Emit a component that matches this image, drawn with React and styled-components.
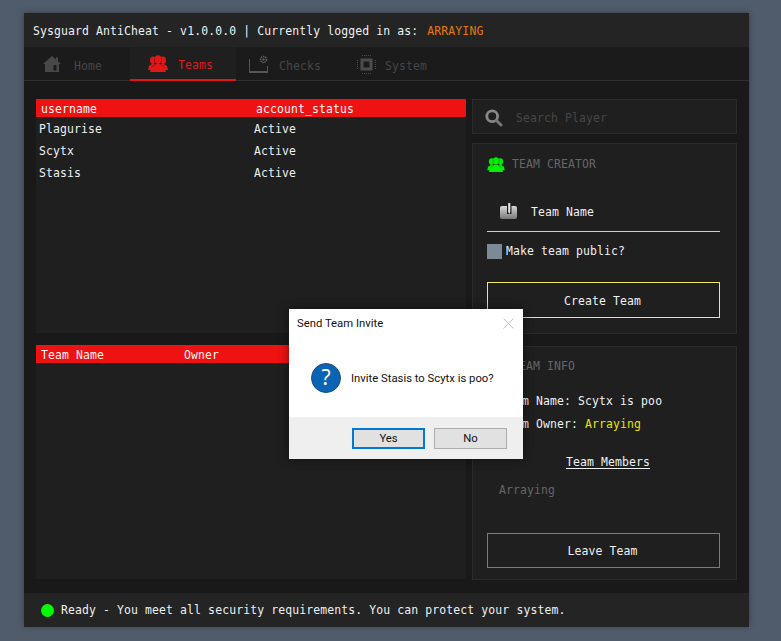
import React from 'react'
import styled, { createGlobalStyle } from 'styled-components'

const GlobalStyle = createGlobalStyle`
  html, body { margin: 0; padding: 0; height: 100%; background: #505c6b; }
  * { box-sizing: border-box; }
`

const Page = styled.div`
  position: relative;
  width: 781px;
  height: 641px;
  padding: 13px 32px 0 24px;
  overflow: hidden;
  font-family: "DejaVu Sans Mono", "Liberation Mono", monospace;
  font-size: 11.45px;
  letter-spacing: 0.12px;
  color: #eef0f2;
`
const Window = styled.div`
  width: 725px;
  height: 613px;
  display: flex;
  flex-direction: column;
  background: #191919;
  box-shadow: 0 0 6px rgba(0, 0, 0, 0.35);
`
const TitleBar = styled.div`
  height: 34px;
  flex: none;
  display: flex;
  align-items: center;
  padding: 2px 0 0 9px;
  background: #242424;
  white-space: pre;
`
const Orange = styled.span`
  margin-left: 2px;
  color: #e8780f;
`
const TabBar = styled.div`
  height: 34px;
  flex: none;
  display: flex;
  background: #1b1b1b;
  border-bottom: 1px solid #2f2f2f;
`
const Tab = styled.div`
  width: 106px;
  height: 34px;
  display: flex;
  align-items: center;
  padding-left: ${p => p.$pad}px;
  gap: ${p => p.$gap}px;
  color: ${p => (p.$active ? '#e01818' : '#464646')};
  background: ${p => (p.$active ? '#1f1f1f' : 'transparent')};
  border-bottom: ${p => (p.$active ? '2px solid #e01818' : 'none')};
`
const TabLabel = styled.span`
  padding-top: 4px;
`
const Body = styled.div`
  flex: 1;
  display: grid;
  grid-template-columns: 430px 265px;
  column-gap: 6px;
  padding: 18px 0 13px 12px;
`
const Column = styled.div`
  display: flex;
  flex-direction: column;
`
const TablePanel = styled.div`
  height: 234px;
  background: #1f1f1f;
  margin-bottom: ${p => (p.$last ? 0 : 12)}px;
`
const HeadRow = styled.div`
  height: 18px;
  display: grid;
  grid-template-columns: ${p => p.$cols};
  align-items: center;
  padding: 1px 0 0 5px;
  background: #ee1212;
  color: #f6f6f6;
`
const Row = styled.div`
  height: 22px;
  display: grid;
  grid-template-columns: 215px 1fr;
  align-items: center;
  padding: 1px 0 0 3px;
`
const Panel = styled.div`
  height: ${p => p.$h}px;
  margin-bottom: ${p => p.$mb || 0}px;
  background: #1f1f1f;
  border: 1px solid #2b2b2b;
`
const SearchBox = styled(Panel)`
  display: flex;
  align-items: center;
  gap: 13px;
  padding: 2px 0 0 12px;
`
const SearchInput = styled.input`
  width: 200px;
  border: 0;
  outline: 0;
  padding: 1px 0 0;
  background: transparent;
  font: inherit;
  letter-spacing: inherit;
  &::placeholder { color: #464646; opacity: 1; }
`
const CardBody = styled.div`
  display: flex;
  flex-direction: column;
  padding: ${p => p.$top}px 16px 0 14px;
  height: 100%;
`
const CardTitle = styled.div`
  height: 16px;
  display: flex;
  align-items: center;
  gap: 7px;
  color: #666;
`
const NameField = styled.div`
  height: 38px;
  margin-top: 22px;
  display: flex;
  align-items: center;
  gap: 14px;
  padding-left: 13px;
  padding-bottom: 2px;
  border-bottom: 1px solid #cfcfcf;
`
const CheckRow = styled.div`
  margin-top: 11px;
  height: 16px;
  display: flex;
  align-items: center;
  gap: 4px;
`
const CheckBox = styled.div`
  width: 15px;
  height: 15px;
  background: #7c8996;
`
const ActionButton = styled.button`
  width: 233px;
  height: ${p => p.$h}px;
  margin-top: ${p => p.$mt}px;
  background: transparent;
  border: 1px solid ${p => p.$color};
  color: #eef0f2;
  font: inherit;
  letter-spacing: inherit;
  padding: 1px 2px 0 0;
`
const InfoLine = styled.div`
  height: 23px;
  display: flex;
  align-items: center;
  white-space: pre;
  padding-left: 14px;
`
const InfoLines = styled.div`
  margin-top: 15px;
`
const Yellow = styled.span`
  color: #e6e600;
`
const MembersTitle = styled.div`
  margin-top: 20px;
  height: 16px;
  text-align: center;
  padding-left: 9px;
  text-decoration: underline;
  text-underline-offset: 2px;
`
const Member = styled.div`
  margin-top: 12px;
  padding-left: 12px;
  height: 16px;
  color: #666;
`
const StatusBar = styled.div`
  height: 34px;
  flex: none;
  display: flex;
  align-items: center;
  gap: 7px;
  padding-left: 17px;
  background: #242424;
`
const Dot = styled.div`
  width: 13px;
  height: 13px;
  border-radius: 50%;
  background: #00ff00;
`
const Dialog = styled.div`
  position: absolute;
  left: 289px;
  top: 309px;
  width: 234px;
  height: 150px;
  display: flex;
  flex-direction: column;
  background: #fff;
  color: #111;
  font-family: "Roboto", "Noto Sans", sans-serif;
  font-size: 11.3px;
  letter-spacing: 0;
  box-shadow: 0 0 10px rgba(0, 0, 0, 0.45);
`
const DialogHead = styled.div`
  height: 30px;
  flex: none;
  display: flex;
  align-items: center;
  justify-content: space-between;
  padding: 0 9px 1px 8px;
`
const DialogMain = styled.div`
  flex: 1;
  display: flex;
  align-items: center;
  gap: 10px;
  padding-left: 22px;
`
const DialogFoot = styled.div`
  height: 42px;
  flex: none;
  display: flex;
  justify-content: flex-end;
  gap: 9px;
  padding: 11px 16px 0 0;
  background: #efefef;
`
const DialogButton = styled.button`
  width: 73px;
  height: 21px;
  padding: 0;
  background: #e1e1e1;
  border: ${p => (p.$focus ? '2px solid #0078d7' : '1px solid #adadad')};
  color: #111;
  font: inherit;
`

const HomeIcon = () => (
  <svg width="18" height="18" viewBox="0 0 18 18">
    <path fill="#484848" fillRule="evenodd" d="M9 1 L13 4.6 V2.5 H15 V6.4 L18 9 H16 V17 H2 V9 H0 Z M10.5 10 V15.5 H13.5 V10 Z" />
  </svg>
)

const TeamIcon = ({ color, w = 20, h = 17 }) => (
  <svg width={w} height={h} viewBox="0 0 20 17">
    <g fill={color}>
      <ellipse cx="5" cy="5.2" rx="3" ry="3.8" />
      <ellipse cx="15" cy="5.2" rx="3" ry="3.8" />
      <path d="M0 15 L1 11 L4 9 H16 L19 11 L20 15 Z" />
      <ellipse cx="10" cy="4.6" rx="3.5" ry="4.3" />
      <path d="M2 17 L3.5 12.5 L8 9.5 H12 L16.5 12.5 L18 17 Z" />
    </g>
    <path fill="none" stroke="#000" strokeOpacity="0.45" strokeWidth="0.7" d="M6.6 3 C6.2 6 6.6 8 7.4 9.4 L3.5 12 M13.4 3 C13.8 6 13.4 8 12.6 9.4 L16.5 12" />
  </svg>
)

const ChecksIcon = () => (
  <svg width="19" height="19" viewBox="0 0 19 19">
    <path fill="none" stroke="#565656" d="M0.5 4 V17 M18.5 11 V17" />
    <path fill="#565656" d="M0 16 H19 V18 H0 Z" />
    <circle cx="14.5" cy="4.5" r="3" fill="none" stroke="#5e5e5e" strokeWidth="1.6" strokeDasharray="1.4 0.8" />
    <circle cx="14.5" cy="4.5" r="1.2" fill="#565656" />
  </svg>
)

const SystemIcon = () => (
  <svg width="19" height="19" viewBox="0 0 19 19">
    <rect x="3.5" y="3.5" width="12" height="12" fill="#4c4c4c" />
    <rect x="6.5" y="6.5" width="6" height="6" fill="#1b1b1b" />
    <path stroke="#4c4c4c" strokeDasharray="1 1" d="M5 0.5 H14 M5 18.5 H14 M0.5 5 V14 M18.5 5 V14" />
  </svg>
)

const SearchIcon = () => (
  <svg width="18" height="18" viewBox="0 0 18 18">
    <circle cx="7.2" cy="7.2" r="5.4" fill="none" stroke="#888" strokeWidth="2.8" />
    <path stroke="#777" strokeWidth="3" strokeLinecap="round" d="M11.5 11.5 L16 16" />
  </svg>
)

const NameIcon = () => (
  <svg width="17" height="17" viewBox="0 0 17 17">
    <defs>
      <linearGradient id="nameFill" x1="0" y1="0" x2="0" y2="1">
        <stop offset="0" stopColor="#d8d8d8" />
        <stop offset="1" stopColor="#777" />
      </linearGradient>
    </defs>
    <rect x="0" y="3" width="17" height="13" rx="2" fill="url(#nameFill)" />
    <path fill="#1f1f1f" d="M7 1 H11.5 V11 H7 Z" />
    <path fill="#e4e4e4" d="M8.2 0 H10.3 V9 L9.25 11 L8.2 9 Z" />
  </svg>
)

const QuestionIcon = () => (
  <svg width="30" height="30" viewBox="0 0 30 30">
    <circle cx="15" cy="15" r="14.5" fill="#0a64b4" stroke="#1d4f82" />
    <text x="15" y="22" textAnchor="middle" fill="#fff" fontFamily="Noto Sans, sans-serif" fontSize="21">?</text>
  </svg>
)

const CloseIcon = () => (
  <svg width="11" height="11" viewBox="0 0 11 11">
    <path stroke="#c4c4c4" d="M0.5 0.5 L10.5 10.5 M10.5 0.5 L0.5 10.5" />
  </svg>
)

const members = ['Plagurise', 'Scytx', 'Stasis']

export default function App() {
  return (
    <Page>
      <GlobalStyle />
      <Window>
        <TitleBar>
          Sysguard AntiCheat - v1.0.0.0 | Currently logged in as: <Orange>ARRAYING</Orange>
        </TitleBar>
        <TabBar>
          <Tab $pad={19} $gap={13}><HomeIcon /><TabLabel>Home</TabLabel></Tab>
          <Tab $active $pad={18} $gap={10}><TeamIcon color="#e01818" /><TabLabel>Teams</TabLabel></Tab>
          <Tab $pad={13} $gap={11}><ChecksIcon /><TabLabel>Checks</TabLabel></Tab>
          <Tab $pad={15} $gap={9}><SystemIcon /><TabLabel>System</TabLabel></Tab>
        </TabBar>
        <Body>
          <Column>
            <TablePanel>
              <HeadRow $cols="215px 1fr"><span>username</span><span>account_status</span></HeadRow>
              {members.map(name => (
                <Row key={name}><span>{name}</span><span>Active</span></Row>
              ))}
            </TablePanel>
            <TablePanel $last>
              <HeadRow $cols="143px 1fr"><span>Team Name</span><span>Owner</span></HeadRow>
            </TablePanel>
          </Column>
          <Column>
            <SearchBox $h={35} $mb={9}>
              <SearchIcon />
              <SearchInput placeholder="Search Player" />
            </SearchBox>
            <Panel $h={191} $mb={12}>
              <CardBody $top={12}>
                <CardTitle><TeamIcon color="#00f000" w={18} h={15} />TEAM CREATOR</CardTitle>
                <NameField><NameIcon />Team Name</NameField>
                <CheckRow><CheckBox />Make team public?</CheckRow>
                <ActionButton $h={36} $mt={23} $color="#f0e86c">Create Team</ActionButton>
              </CardBody>
            </Panel>
            <Panel $h={234}>
              <CardBody $top={11}>
                <CardTitle><TeamIcon color="#00f000" w={18} h={15} />TEAM INFO</CardTitle>
                <InfoLines>
                  <InfoLine>Team Name: Scytx is poo</InfoLine>
                  <InfoLine>Team Owner: <Yellow>Arraying</Yellow></InfoLine>
                </InfoLines>
                <MembersTitle>Team Members</MembersTitle>
                <Member>Arraying</Member>
                <ActionButton $h={35} $mt={34} $color="#c75a5e">Leave Team</ActionButton>
              </CardBody>
            </Panel>
          </Column>
        </Body>
        <StatusBar>
          <Dot />
          Ready - You meet all security requirements. You can protect your system.
        </StatusBar>
      </Window>
      <Dialog>
        <DialogHead>Send Team Invite<CloseIcon /></DialogHead>
        <DialogMain><QuestionIcon />Invite Stasis to Scytx is poo?</DialogMain>
        <DialogFoot>
          <DialogButton $focus>Yes</DialogButton>
          <DialogButton>No</DialogButton>
        </DialogFoot>
      </Dialog>
    </Page>
  )
}
